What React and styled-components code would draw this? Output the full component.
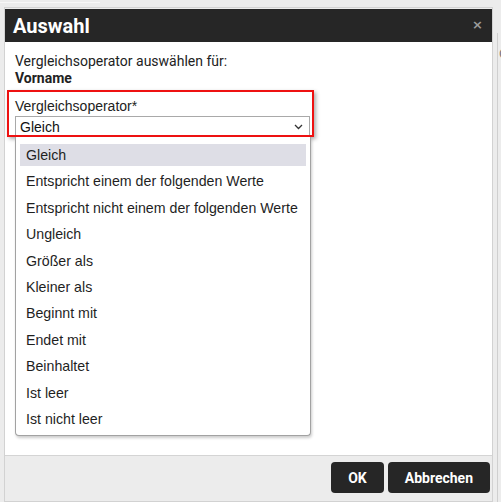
import React from "react";
import styled, { createGlobalStyle } from "styled-components";

const OPERATORS = [
  "Gleich",
  "Entspricht einem der folgenden Werte",
  "Entspricht nicht einem der folgenden Werte",
  "Ungleich",
  "Größer als",
  "Kleiner als",
  "Beginnt mit",
  "Endet mit",
  "Beinhaltet",
  "Ist leer",
  "Ist nicht leer",
];

const GlobalStyle = createGlobalStyle`
  html, body {
    margin: 0;
    padding: 0;
    background: #ececec;
    font-family: Roboto, "Liberation Sans", Arial, sans-serif;
    overflow: hidden;
  }
`;

const Page = styled.div`
  position: relative;
  width: 501px;
  height: 502px;
  overflow: hidden;
`;

const TopLine = styled.div`
  height: 1px;
  width: 100px;
  margin-top: 2px;
  background: #f7f7f7;
`;

const Stage = styled.div`
  display: flex;
  margin-top: 4px;
`;

const Dialog = styled.div`
  box-sizing: border-box;
  width: 489px;
  height: 495px;
  margin-left: 4px;
  border: 1px solid #d2d2d2;
  background: #ececec;
  display: flex;
  flex-direction: column;
  padding-top: 1px;
`;

const Header = styled.div`
  height: 33px;
  flex-shrink: 0;
  background: #262626;
  display: flex;
  align-items: center;
  justify-content: space-between;
  padding: 0 9px 0 8px;
`;

const Title = styled.h1`
  margin: 0;
  color: #fff;
  font-family: Roboto, "Liberation Sans", sans-serif;
  font-weight: 700;
  font-size: 20px;
  line-height: 24px;
`;

const Close = styled.span`
  color: #9c9c9c;
  font-family: "DejaVu Sans", sans-serif;
  font-weight: 700;
  font-size: 13px;
  line-height: 13px;
  margin-top: -3px;
`;

const Body = styled.div`
  box-sizing: border-box;
  height: 414px;
  flex-shrink: 0;
  background: #fff;
  border-bottom: 1px solid #d4d4d4;
  padding: 11px 0 0 2px;
`;

const Intro = styled.div`
  padding-left: 8px;
  font-size: 14px;
  line-height: 17px;
  color: #222;
`;

const Strong = styled.div`
  font-weight: 700;
`;

const Field = styled.div`
  position: relative;
  box-sizing: border-box;
  width: 307px;
  margin-top: 3px;
  padding: 6px 2px 0 6px;
  border: 2px solid #ee1111;
  box-shadow: 2px 2px 4px rgba(0, 0, 0, 0.32);
  font-family: "Liberation Sans", Arial, sans-serif;
`;

const Label = styled.div`
  font-size: 14px;
  line-height: 16px;
  color: #222;
`;

const Select = styled.div`
  box-sizing: border-box;
  margin-top: 2px;
  height: 19px;
  border: 1px solid #a9a9a9;
  border-bottom: none;
  display: flex;
  align-items: center;
  justify-content: space-between;
  padding: 1px 6px 0 4px;
  font-size: 14px;
  color: #111;
`;

const Menu = styled.ul`
  position: absolute;
  top: calc(100% + 2px);
  left: 6px;
  box-sizing: border-box;
  width: 296px;
  margin: 0;
  padding: 7px 4px 5px 4px;
  list-style: none;
  background: #fff;
  border: 1px solid #a2a2a2;
  border-top: none;
  border-radius: 0 0 4px 4px;
  box-shadow: 1px 2px 3px rgba(0, 0, 0, 0.2);
  display: flex;
  flex-direction: column;
  gap: 4.4px;
`;

const Option = styled.li`
  height: 22px;
  display: flex;
  align-items: center;
  padding-left: 6px;
  font-size: 14.2px;
  color: #1f1f1f;
  background: ${(p) => (p.$active ? "#dedee6" : "transparent")};
  white-space: nowrap;
`;

const Footer = styled.div`
  flex: 1;
  display: flex;
  justify-content: flex-end;
  align-items: flex-start;
  gap: 4px;
  padding: 6px 2px 0 0;
`;

const Button = styled.button`
  height: 31px;
  padding: 0 17px;
  border: none;
  border-radius: 4px;
  background: #262626;
  color: #fff;
  font-family: Roboto, "Liberation Sans", sans-serif;
  font-weight: 700;
  font-size: 14px;
  cursor: pointer;
`;

const Behind = styled.div`
  flex: 1;
  margin: 26px 0 0 4px;
  border-left: 1px solid #cfcfcf;
  overflow: hidden;
  font-size: 13px;
  color: #777;
  padding-top: 13px;
  padding-left: 1px;
`;

const Chevron = () => (
  <svg width="9" height="6" viewBox="0 0 9 6">
    <polyline
      points="1,1 4.5,4.5 8,1"
      fill="none"
      stroke="#333"
      strokeWidth="1.3"
    />
  </svg>
);

const App = () => {
  return (
    <React.Fragment>
      <GlobalStyle />
      <Page>
        <TopLine />
        <Stage>
          <Dialog>
            <Header>
              <Title>Auswahl</Title>
              <Close>×</Close>
            </Header>
            <Body>
              <Intro>
                Vergleichsoperator auswählen für:
                <Strong>Vorname</Strong>
              </Intro>
              <Field>
                <Label>Vergleichsoperator*</Label>
                <Select>
                  <span>Gleich</span>
                  <Chevron />
                </Select>
                <Menu>
                  {OPERATORS.map((op, idx) => (
                    <Option key={op} $active={idx === 0}>
                      {op}
                    </Option>
                  ))}
                </Menu>
              </Field>
            </Body>
            <Footer>
              <Button>OK</Button>
              <Button>Abbrechen</Button>
            </Footer>
          </Dialog>
          <Behind>C</Behind>
        </Stage>
      </Page>
    </React.Fragment>
  );
};

export default App;
